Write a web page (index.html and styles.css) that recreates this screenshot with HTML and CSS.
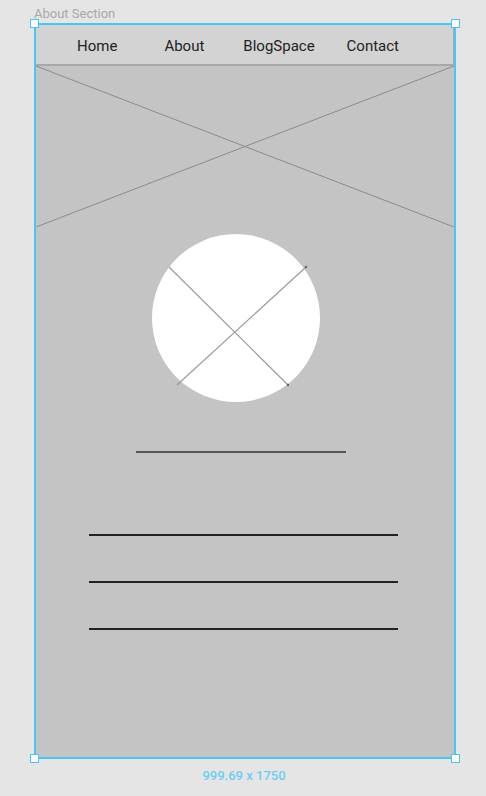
FILE: index.html
```html
<!DOCTYPE html>
<html lang="en">
<head>
    <meta charset="UTF-8">
    <meta name="viewport" content="width=device-width, initial-scale=1.0">
    <title>About Section</title>
    <link rel="stylesheet" href="styles.css">
</head>
<body>
    <div class="label">About Section</div>
    <div class="frame">
        <span class="handle tl"></span>
        <span class="handle tr"></span>
        <span class="handle bl"></span>
        <span class="handle br"></span>

        <nav class="nav">
            <a>Home</a>
            <a>About</a>
            <a>BlogSpace</a>
            <a>Contact</a>
        </nav>

        <!-- hero placeholder -->
        <svg class="hero" viewBox="0 0 418 161" preserveAspectRatio="none">
            <line x1="0" y1="0" x2="418" y2="161" stroke="#8a8a8a" stroke-width="1"/>
            <line x1="0" y1="161" x2="418" y2="0" stroke="#8a8a8a" stroke-width="1"/>
        </svg>

        <!-- avatar placeholder -->
        <svg class="avatar" viewBox="0 0 168 168">
            <circle cx="84" cy="84" r="84" fill="#fff"/>
            <line x1="17" y1="33" x2="136" y2="151" stroke="#9a9a9a" stroke-width="1.2"/>
            <line x1="154" y1="33" x2="25" y2="151" stroke="#9a9a9a" stroke-width="1.2"/>
            <circle cx="136" cy="151" r="1.2" fill="#666"/>
            <circle cx="154" cy="33" r="1.2" fill="#666"/>
        </svg>

        <div class="title-line"></div>

        <div class="text-lines">
            <div class="text-line"></div>
            <div class="text-line"></div>
            <div class="text-line"></div>
        </div>
    </div>
    <div class="size">999.69 x 1750</div>
</body>
</html>
```

FILE: styles.css
```css
body { margin: 0; background: #e5e5e5; font-family: Roboto, "Liberation Sans", sans-serif; }
.label { margin: 5px 0 0 34px; height: 18px; font-size: 13px; line-height: 18px; color: #a8a8a8; }
.frame { position: relative; margin-left: 34px; width: 418px; height: 732px; border: 2px solid #4cc4f5; background: #c4c4c4; }
.handle { position: absolute; width: 7px; height: 7px; background: #fff; border: 1px solid #4cc4f5; }
.handle.tl { left: -6px; top: -6px; }
.handle.tr { right: -6px; top: -6px; }
.handle.bl { left: -6px; bottom: -6px; }
.handle.br { right: -6px; bottom: -6px; }
.nav { display: flex; align-items: center; height: 37px; padding: 2px 0 0 41px; background: #d3d3d3; border-bottom: 2px solid #a8a8a8; border-right: 1px solid #a8a8a8; }
.nav a { font-size: 15px; color: #222; }
.nav a:nth-child(2) { margin-left: 47px; }
.nav a:nth-child(3) { margin-left: 39px; }
.nav a:nth-child(4) { margin-left: 32px; }
.hero { display: block; width: 418px; height: 161px; }
.avatar { display: block; width: 168px; height: 168px; margin: 7px 0 0 116px; }
.title-line { width: 210px; height: 2px; margin: 49px 0 0 100px; background: #555; }
.text-lines { display: flex; flex-direction: column; gap: 45px; margin: 81px 0 0 53px; }
.text-line { width: 309px; height: 2px; background: #222; }
.size { margin: 9px 0 0; width: 488px; text-align: center; font-size: 13px; font-weight: 500; color: #6ccdf7; }
```
